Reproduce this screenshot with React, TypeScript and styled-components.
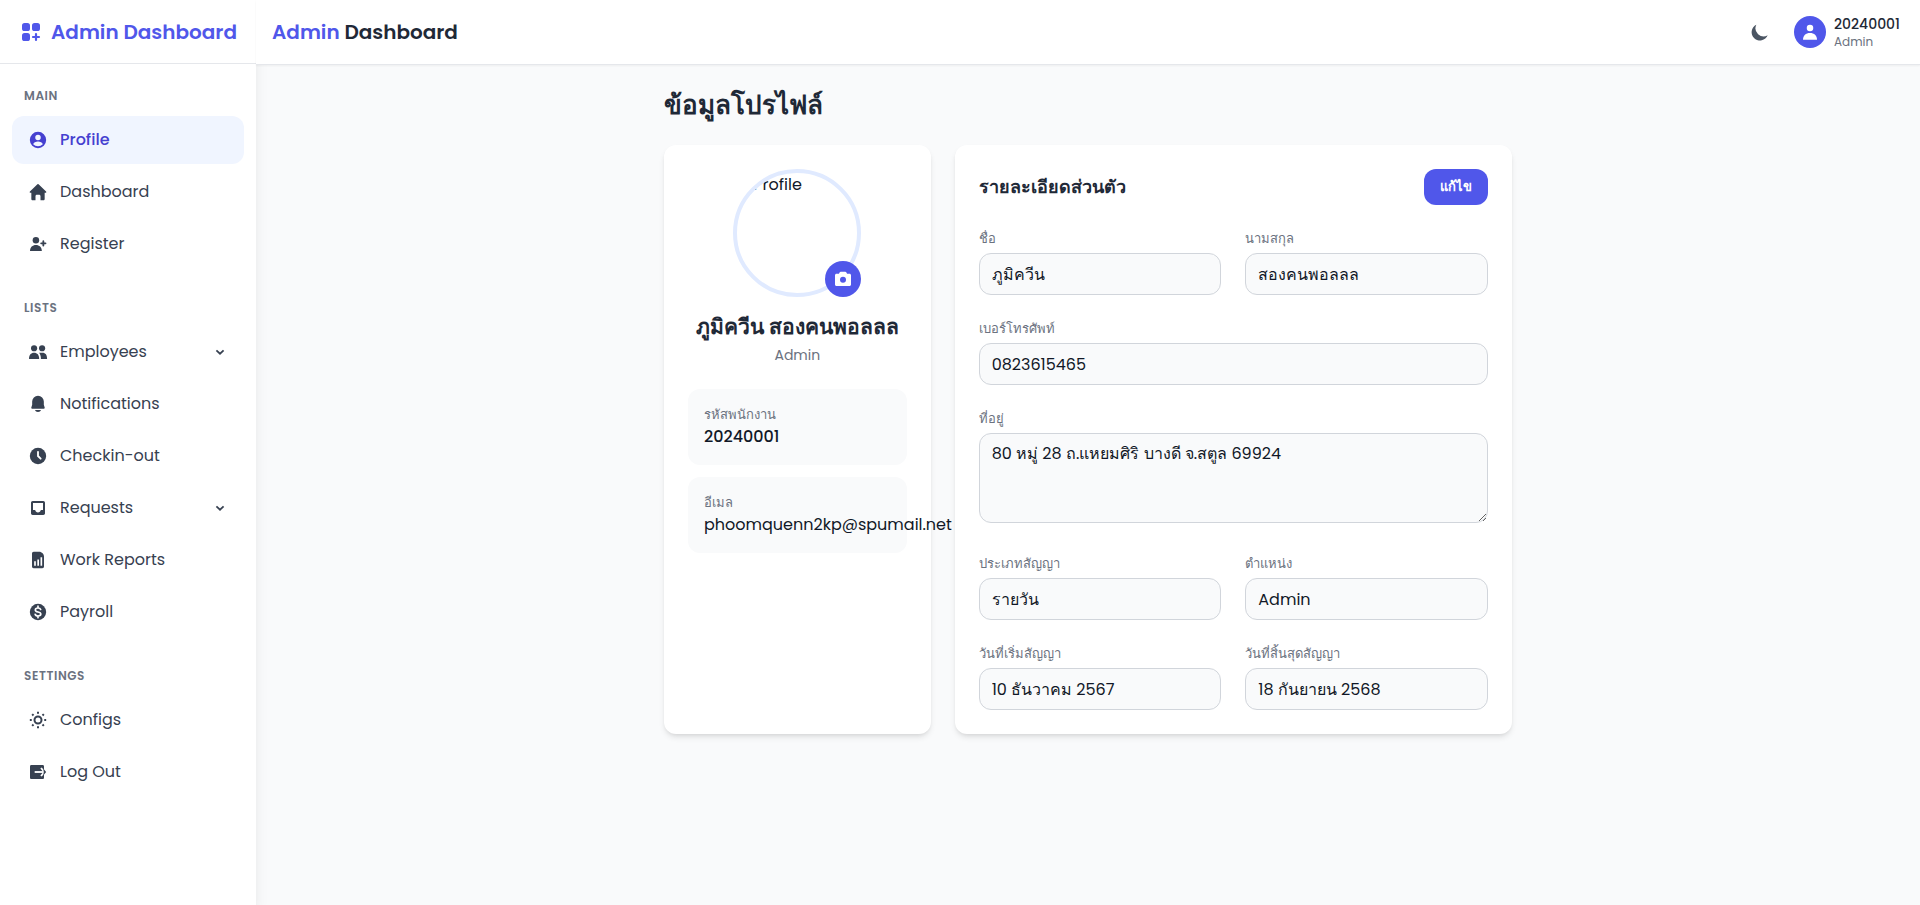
import React from "react";
import type { ReactNode } from "react";
import styled, { createGlobalStyle, css } from "styled-components";

const color = {
  primary: "#5057ea",
  primaryDark: "#4540d0",
  primarySoft: "#f0f5ff",
  primaryRing: "#e0eaff",
  ink: "#1f2937",
  inkStrong: "#111827",
  nav: "#374151",
  icon: "#4b5563",
  muted: "#6b7280",
  field: "#f9fafb",
  line: "#e5e7eb",
  fieldLine: "#d1d5db",
};

const GlobalStyle = createGlobalStyle`
  *, *::before, *::after { box-sizing: border-box; }
  body {
    margin: 0;
    font-family: Poppins, "Liberation Sans", sans-serif;
    font-size: 16px;
    line-height: 24px;
    color: ${color.inkStrong};
    background: ${color.field};
    -webkit-font-smoothing: antialiased;
  }
  button, input, textarea { font: inherit; color: inherit; margin: 0; }
  h1, h2, h3, p, ul { margin: 0; padding: 0; }
  ul { list-style: none; }
`;

/* ---------- icons ---------- */

const Svg = styled.svg<{ $size: number }>`
  display: block;
  flex: none;
  width: ${(p) => p.$size}px;
  height: ${(p) => p.$size}px;
  fill: currentColor;
`;

type IconName = keyof typeof shapes;

const shapes = {
  logo: (
    <>
      <rect x="3" y="3" width="8" height="8" rx="2.600" />
      <rect x="13" y="3" width="8" height="8" rx="2.600" />
      <rect x="3" y="13" width="8" height="8" rx="2.600" />
      <path d="M17 14v6M14 17h6" stroke="currentColor" strokeWidth="2.200" strokeLinecap="round" />
    </>
  ),
  profile: (
    <path
      fillRule="evenodd"
      d="M12 2.200a9.800 9.800 0 1 0 0 19.600 9.800 9.800 0 0 0 0-19.600zm0 3.400a3.300 3.300 0 1 1 0 6.600 3.300 3.300 0 0 1 0-6.600zm0 14a7.800 7.800 0 0 1-5.800-2.600c.7-2 3-3.200 5.800-3.200s5.100 1.200 5.800 3.200A7.800 7.800 0 0 1 12 19.600z"
    />
  ),
  home: (
    <path d="M12.700 2.700a1 1 0 0 0-1.400 0l-9 8.600c-.6.600-.2 1.700.7 1.700h1v7.500c0 .8.600 1.500 1.500 1.500H9v-5c0-1 .7-1.700 1.700-1.700h2.600c1 0 1.700.7 1.700 1.700v5h3.500c.9 0 1.500-.7 1.500-1.500V13h1c.9 0 1.300-1.100.7-1.700z" />
  ),
  register: (
    <>
      <circle cx="9.500" cy="7.400" r="3.900" />
      <path d="M2.400 20.400c0-4.600 3-7.200 7.100-7.200s7.100 2.600 7.100 7.200z" />
      <path d="M18.400 8.600v5.200M15.800 11.200H21" stroke="currentColor" strokeWidth="2.200" strokeLinecap="round" />
    </>
  ),
  employees: (
    <>
      <circle cx="7.300" cy="7.500" r="3.700" />
      <circle cx="16.900" cy="7.500" r="3.700" />
      <path d="M1.200 20.300c0-4.600 2.300-7.300 6.100-7.300s6.100 2.700 6.100 7.300z" />
      <path d="M13.300 13h4c3.800 0 5.600 2.700 5.600 7.300h-7.400c0-3.100-.7-5.500-2.200-7.300z" />
    </>
  ),
  bell: (
    <path d="M12 2a7 7 0 0 0-7 7v4l-1 3.200c-.3.900.1 1.400.9 1.400h14.200c.8 0 1.200-.5.900-1.400L19 13V9a7 7 0 0 0-7-7zM8.400 19.200c.4 1.400 1.800 2.400 3.600 2.400s3.200-1 3.600-2.400z" />
  ),
  clock: (
    <>
      <circle cx="12" cy="12" r="9.800" />
      <path d="M12 7v5l3.200 3.200" fill="none" stroke="#fff" strokeWidth="2.200" strokeLinecap="round" />
    </>
  ),
  inbox: (
    <path
      fillRule="evenodd"
      d="M5.600 3.600h12.800c1.100 0 2 .9 2 2v12.800c0 1.100-.9 2-2 2H5.600c-1.100 0-2-.9-2-2V5.600c0-1.100.9-2 2-2zm.4 2.400v8.400h2.600c.3 1.700 1.700 2.900 3.400 2.900s3.100-1.200 3.400-2.900H18V6z"
    />
  ),
  report: (
    <path
      fillRule="evenodd"
      d="M6.800 2.200h6.400c3.600 0 6 2.800 6 6v11.600c0 1.100-.9 2-2 2H6.800c-1.100 0-2-.9-2-2V4.200c0-1.100.9-2 2-2zM7.400 13.600v5.200h2v-5.200zm3.800-2.200v7.400h2v-7.400zm3.800-2.600v10h2V8.800z"
    />
  ),
  dollar: (
    <>
      <circle cx="12" cy="12" r="9.800" />
      <path
        d="M15.200 9c-.4-1.200-1.500-1.800-3.200-1.800-2 0-3.200.8-3.200 2.300 0 3.600 6.600 1.300 6.600 5 0 1.500-1.300 2.300-3.400 2.300-1.900 0-3.100-.7-3.400-2.100M12 5v2.200M12 16.800V19"
        fill="none"
        stroke="#fff"
        strokeWidth="2"
        strokeLinecap="round"
      />
    </>
  ),
  sun: (
    <g fill="none" stroke="currentColor" strokeWidth="2.400">
      <circle cx="12" cy="12" r="4.200" />
      <path d="M12 2.200v2.300M12 19.500v2.300M2.200 12h2.300M19.500 12h2.300M5 5l1.600 1.600M17.400 17.400 19 19M5 19l1.600-1.600M17.400 6.600 19 5" />
    </g>
  ),
  logout: (
    <>
      <path d="M4 3.600h13.600c.9 0 1.600.7 1.600 1.600v13.600c0 .9-.7 1.600-1.600 1.600H4c-.9 0-1.600-.7-1.600-1.600V5.200c0-.9.700-1.600 1.600-1.600z" />
      <path d="M15.600 7.200l4.200 4.800-4.200 4.800" fill="none" stroke="#fff" strokeWidth="2.200" />
      <path d="M18.600 8.200 21.800 12l-3.200 3.800z" />
      <path d="M8 12h10.600" stroke="#fff" strokeWidth="2.200" />
    </>
  ),
  moon: <path d="M7.600 3.200A10 10 0 1 0 21.200 16 9.800 9.800 0 0 1 7.600 3.200z" />,
  user: (
    <>
      <circle cx="12" cy="7.200" r="3.900" />
      <path d="M3.600 21.400c0-5 3.400-8.200 8.400-8.200s8.400 3.200 8.400 8.200z" />
    </>
  ),
  camera: (
    <path
      fillRule="evenodd"
      d="M9.200 3.200h5.600c.5 0 .9.300 1.100.7l1 1.700h2.900c1 0 1.800.8 1.800 1.800v11.200c0 1-.8 1.800-1.800 1.800H4.200c-1 0-1.800-.8-1.800-1.800V7.400c0-1 .8-1.800 1.800-1.800h2.900l1-1.700c.2-.4.600-.7 1.100-.7zM12 9.200a3.600 3.600 0 1 0 0 7.200 3.600 3.600 0 0 0 0-7.200z"
    />
  ),
  chevron: <path d="m6.600 9.400 5.400 5.200 5.400-5.200" fill="none" stroke="currentColor" strokeWidth="2.600" />,
};

function Icon({ name, size = 20 }: { name: IconName; size?: number }) {
  return (
    <Svg $size={size} viewBox="0 0 24 24" aria-hidden="true">
      {shapes[name]}
    </Svg>
  );
}

/* ---------- shell ---------- */

const Shell = styled.div`
  display: flex;
  min-height: 100vh;
`;

const Sidebar = styled.aside`
  flex: none;
  width: 256px;
  background: #fff;
  box-shadow: 0 10px 15px -3px rgba(0, 0, 0, 0.1), 0 4px 6px -4px rgba(0, 0, 0, 0.1);
`;

const Brand = styled.div`
  display: flex;
  align-items: center;
  justify-content: center;
  gap: 8px;
  height: 64px;
  border-bottom: 1px solid ${color.line};
  color: ${color.primary};
  font-size: 20px;
  font-weight: 600;
  line-height: 28px;
  white-space: nowrap;
`;

const Nav = styled.nav`
  display: flex;
  flex-direction: column;
  gap: 32px;
  padding: 24px 12px;
`;

const NavHeading = styled.h3`
  padding: 0 12px;
  margin-bottom: 12px;
  font-size: 12px;
  font-weight: 600;
  line-height: 16px;
  letter-spacing: 0.05em;
  text-transform: uppercase;
  color: ${color.muted};
`;

const NavList = styled.ul`
  display: flex;
  flex-direction: column;
  gap: 4px;
`;

const navItem = css<{ $active?: boolean }>`
  display: flex;
  align-items: center;
  gap: 12px;
  width: 100%;
  padding: 12px 16px;
  border: 0;
  border-radius: 12px;
  text-align: left;
  text-decoration: none;
  cursor: pointer;
  font-weight: ${(p) => (p.$active ? 500 : 400)};
  color: ${(p) => (p.$active ? color.primaryDark : color.nav)};
  background: ${(p) => (p.$active ? color.primarySoft : "transparent")};
`;

const NavLink = styled.a<{ $active?: boolean }>`
  ${navItem}
`;

const NavToggle = styled.button<{ $active?: boolean }>`
  ${navItem}
`;

const NavLabel = styled.span`
  flex: 1;
`;

const Main = styled.div`
  flex: 1;
  min-width: 0;
  display: flex;
  flex-direction: column;
`;

const TopBar = styled.header`
  position: relative;
  display: flex;
  align-items: center;
  justify-content: space-between;
  min-height: 65px;
  padding: 0 20px 0 16px;
  background: #fff;
  border-bottom: 1px solid ${color.line};
  box-shadow: 0 1px 2px rgba(0, 0, 0, 0.05);
`;

const TopTitle = styled.h1`
  font-size: 20px;
  font-weight: 600;
  line-height: 28px;
  color: ${color.ink};

  span {
    color: ${color.primary};
  }
`;

const TopActions = styled.div`
  display: flex;
  align-items: center;
  gap: 16px;
`;

const IconButton = styled.button`
  display: flex;
  padding: 8px;
  border: 0;
  border-radius: 50%;
  background: none;
  color: ${color.icon};
  cursor: pointer;
`;

const UserMenu = styled.button`
  display: flex;
  align-items: center;
  gap: 8px;
  padding: 0;
  border: 0;
  background: none;
  text-align: left;
  cursor: pointer;
`;

const UserBadge = styled.span`
  display: grid;
  place-items: center;
  width: 32px;
  height: 32px;
  border-radius: 50%;
  background: ${color.primary};
  color: #fff;
`;

const UserText = styled.span`
  display: flex;
  flex-direction: column;
`;

const UserId = styled.span`
  font-size: 14px;
  font-weight: 500;
  line-height: 20px;
  color: ${color.ink};
`;

const UserRole = styled.span`
  font-size: 12px;
  line-height: 16px;
  color: ${color.muted};
`;

/* ---------- profile page ---------- */

const Content = styled.main`
  width: 100%;
  max-width: 896px;
  margin: 0 auto;
  padding: 24px;
`;

const PageTitle = styled.h2`
  margin-bottom: 24px;
  font-size: 26px;
  font-weight: 700;
  line-height: 32px;
  color: ${color.ink};
`;

const Columns = styled.div`
  display: grid;
  grid-template-columns: minmax(0, 1fr) minmax(0, 1fr) minmax(0, 1fr);
  gap: 24px;
`;

const Card = styled.section<{ $span?: number }>`
  grid-column: span ${(p) => p.$span ?? 1};
  padding: 24px;
  border-radius: 12px;
  background: #fff;
  box-shadow: 0 4px 6px -1px rgba(0, 0, 0, 0.1), 0 2px 4px -2px rgba(0, 0, 0, 0.1);
`;

const Person = styled.div`
  display: flex;
  flex-direction: column;
  align-items: center;
  margin-bottom: 24px;
`;

const AvatarWrap = styled.div`
  position: relative;
  margin-bottom: 16px;
`;

const Avatar = styled.div`
  width: 128px;
  height: 128px;
  padding-left: 16px;
  overflow: hidden;
  border: 4px solid ${color.primaryRing};
  border-radius: 50%;
`;

const AvatarButton = styled.button`
  position: absolute;
  right: 0;
  bottom: 0;
  padding: 8px;
  border: 0;
  border-radius: 50%;
  background: ${color.primary};
  color: #fff;
  cursor: pointer;
`;

const PersonName = styled.h3`
  margin-bottom: 4px;
  font-size: 21px;
  font-weight: 600;
  line-height: 28px;
  white-space: nowrap;
  color: ${color.ink};
`;

const PersonRole = styled.p`
  font-size: 14px;
  line-height: 20px;
  color: ${color.muted};
`;

const InfoList = styled.div`
  display: flex;
  flex-direction: column;
  gap: 12px;
`;

const InfoBox = styled.div`
  padding: 16px;
  border-radius: 12px;
  background: ${color.field};
`;

const InfoLabel = styled.p`
  font-size: 13px;
  line-height: 20px;
  color: ${color.muted};
`;

const InfoValue = styled.p<{ $strong?: boolean }>`
  font-weight: ${(p) => (p.$strong ? 500 : 400)};
`;

const CardHead = styled.div`
  display: flex;
  align-items: center;
  justify-content: space-between;
  margin-bottom: 24px;
`;

const CardTitle = styled.h3`
  font-size: 18px;
  font-weight: 600;
  line-height: 28px;
  color: ${color.ink};
`;

const EditButton = styled.button`
  padding: 8px 16px;
  border: 0;
  border-radius: 12px;
  background: ${color.primary};
  color: #fff;
  font-size: 13px;
  font-weight: 600;
  line-height: 20px;
  cursor: pointer;
`;

const Form = styled.form`
  display: grid;
  grid-template-columns: 1fr 1fr;
  gap: 24px;
`;

const FieldBox = styled.div<{ $wide?: boolean }>`
  grid-column: ${(p) => (p.$wide ? "1 / -1" : "auto")};
`;

const Label = styled.label`
  display: block;
  margin-bottom: 4px;
  font-size: 13px;
  line-height: 20px;
  color: ${color.muted};
`;

const fieldLook = css`
  width: 100%;
  padding: 8px 12px;
  border: 1px solid ${color.fieldLine};
  border-radius: 12px;
  background: ${color.field};
  color: ${color.inkStrong};
  line-height: 24px;
`;

const Input = styled.input`
  ${fieldLook}
  display: block;
  height: 42px;
`;

const TextArea = styled.textarea`
  ${fieldLook}
`;

function Field({ id, label, children, wide }: { id: string; label: string; children: ReactNode; wide?: boolean }) {
  return (
    <FieldBox $wide={wide}>
      <Label htmlFor={id}>{label}</Label>
      {children}
    </FieldBox>
  );
}

type Item = { icon: IconName; label: string; active?: boolean; expandable?: boolean };

const sections: { title: string; items: Item[] }[] = [
  {
    title: "Main",
    items: [
      { icon: "profile", label: "Profile", active: true },
      { icon: "home", label: "Dashboard" },
      { icon: "register", label: "Register" },
    ],
  },
  {
    title: "Lists",
    items: [
      { icon: "employees", label: "Employees", expandable: true },
      { icon: "bell", label: "Notifications" },
      { icon: "clock", label: "Checkin-out" },
      { icon: "inbox", label: "Requests", expandable: true },
      { icon: "report", label: "Work Reports" },
      { icon: "dollar", label: "Payroll" },
    ],
  },
  {
    title: "Settings",
    items: [
      { icon: "sun", label: "Configs" },
      { icon: "logout", label: "Log Out" },
    ],
  },
];

function NavRow({ item }: { item: Item }) {
  const inner = (
    <>
      <Icon name={item.icon} />
      <NavLabel>{item.label}</NavLabel>
      {item.expandable && <Icon name="chevron" size={16} />}
    </>
  );
  return (
    <li>
      {item.expandable ? (
        <NavToggle type="button" aria-expanded={false}>
          {inner}
        </NavToggle>
      ) : (
        <NavLink href="#" $active={item.active} aria-current={item.active ? "page" : undefined}>
          {inner}
        </NavLink>
      )}
    </li>
  );
}

export default function App() {
  return (
    <>
      <GlobalStyle />
      <Shell>
        <Sidebar>
          <Brand>
            <Icon name="logo" size={24} />
            <span>Admin Dashboard</span>
          </Brand>
          <Nav>
            {sections.map((section) => (
              <div key={section.title}>
                <NavHeading>{section.title}</NavHeading>
                <NavList>
                  {section.items.map((item) => (
                    <NavRow key={item.label} item={item} />
                  ))}
                </NavList>
              </div>
            ))}
          </Nav>
        </Sidebar>

        <Main>
          <TopBar>
            <TopTitle>
              <span>Admin</span> Dashboard
            </TopTitle>
            <TopActions>
              <IconButton type="button" aria-label="Dark mode">
                <Icon name="moon" />
              </IconButton>
              <UserMenu type="button">
                <UserBadge>
                  <Icon name="user" />
                </UserBadge>
                <UserText>
                  <UserId>20240001</UserId>
                  <UserRole>Admin</UserRole>
                </UserText>
              </UserMenu>
            </TopActions>
          </TopBar>

          <Content>
            <PageTitle>ข้อมูลโปรไฟล์</PageTitle>
            <Columns>
              <Card>
                <Person>
                  <AvatarWrap>
                    <Avatar>Profile</Avatar>
                    <AvatarButton type="button" aria-label="Change photo">
                      <Icon name="camera" />
                    </AvatarButton>
                  </AvatarWrap>
                  <PersonName>ภูมิควีน สองคนพอลลล</PersonName>
                  <PersonRole>Admin</PersonRole>
                </Person>
                <InfoList>
                  <InfoBox>
                    <InfoLabel>รหัสพนักงาน</InfoLabel>
                    <InfoValue $strong>20240001</InfoValue>
                  </InfoBox>
                  <InfoBox>
                    <InfoLabel>อีเมล</InfoLabel>
                    <InfoValue>phoomquenn2kp@spumail.net</InfoValue>
                  </InfoBox>
                </InfoList>
              </Card>

              <Card $span={2}>
                <CardHead>
                  <CardTitle>รายละเอียดส่วนตัว</CardTitle>
                  <EditButton type="button">แก้ไข</EditButton>
                </CardHead>
                <Form>
                  <Field id="first-name" label="ชื่อ">
                    <Input id="first-name" readOnly value="ภูมิควีน" />
                  </Field>
                  <Field id="last-name" label="นามสกุล">
                    <Input id="last-name" readOnly value="สองคนพอลลล" />
                  </Field>
                  <Field id="phone" label="เบอร์โทรศัพท์" wide>
                    <Input id="phone" readOnly value="0823615465" />
                  </Field>
                  <Field id="address" label="ที่อยู่" wide>
                    <TextArea id="address" rows={3} readOnly value="80 หมู่ 28 ถ.แหยมศิริ บางดี จ.สตูล 69924" />
                  </Field>
                  <Field id="contract" label="ประเภทสัญญา">
                    <Input id="contract" readOnly value="รายวัน" />
                  </Field>
                  <Field id="position" label="ตำแหน่ง">
                    <Input id="position" readOnly value="Admin" />
                  </Field>
                  <Field id="start-date" label="วันที่เริ่มสัญญา">
                    <Input id="start-date" readOnly value="10 ธันวาคม 2567" />
                  </Field>
                  <Field id="end-date" label="วันที่สิ้นสุดสัญญา">
                    <Input id="end-date" readOnly value="18 กันยายน 2568" />
                  </Field>
                </Form>
              </Card>
            </Columns>
          </Content>
        </Main>
      </Shell>
    </>
  );
}
